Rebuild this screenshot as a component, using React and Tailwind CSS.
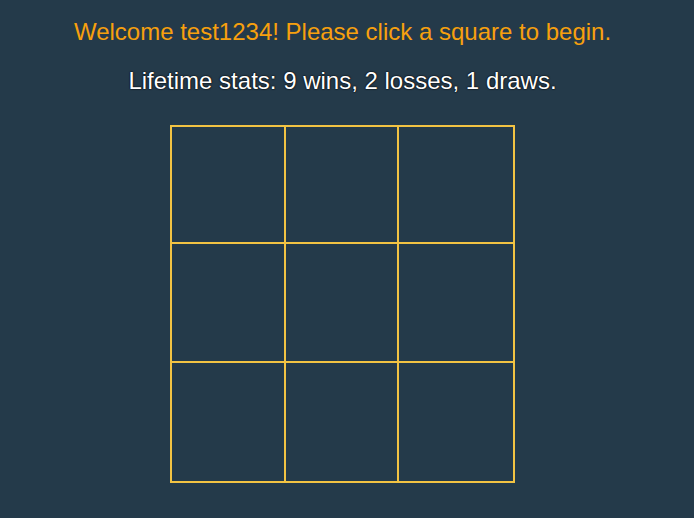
export default function App() {
  return (
    <div className="min-h-[518px] w-full bg-[#243a4a]" style={{ fontFamily: '"Liberation Sans", Arial, sans-serif' }}>
      <div className="w-[685px] flex flex-col items-center">
        <div className="pt-[18px] text-[24px] leading-[28px] text-[#f7a00e]">Welcome test1234! Please click a square to begin.</div>
        <div className="mt-[21px] text-[24px] leading-[28px] text-white [text-shadow:0_0_2px_#000,0_0_1px_#000]">Lifetime stats: 9 wins, 2 losses, 1 draws.</div>
        <div className="mt-[30px] grid gap-[2px] p-[2px] bg-[#f2c343] grid-cols-[112px_111px_114px] grid-rows-[115px_117px_118px]">
          {Array.from({ length: 9 }).map((_, i) => (
            <div key={i} className="bg-[#243a4a]" />
          ))}
        </div>
      </div>
    </div>
  );
}
